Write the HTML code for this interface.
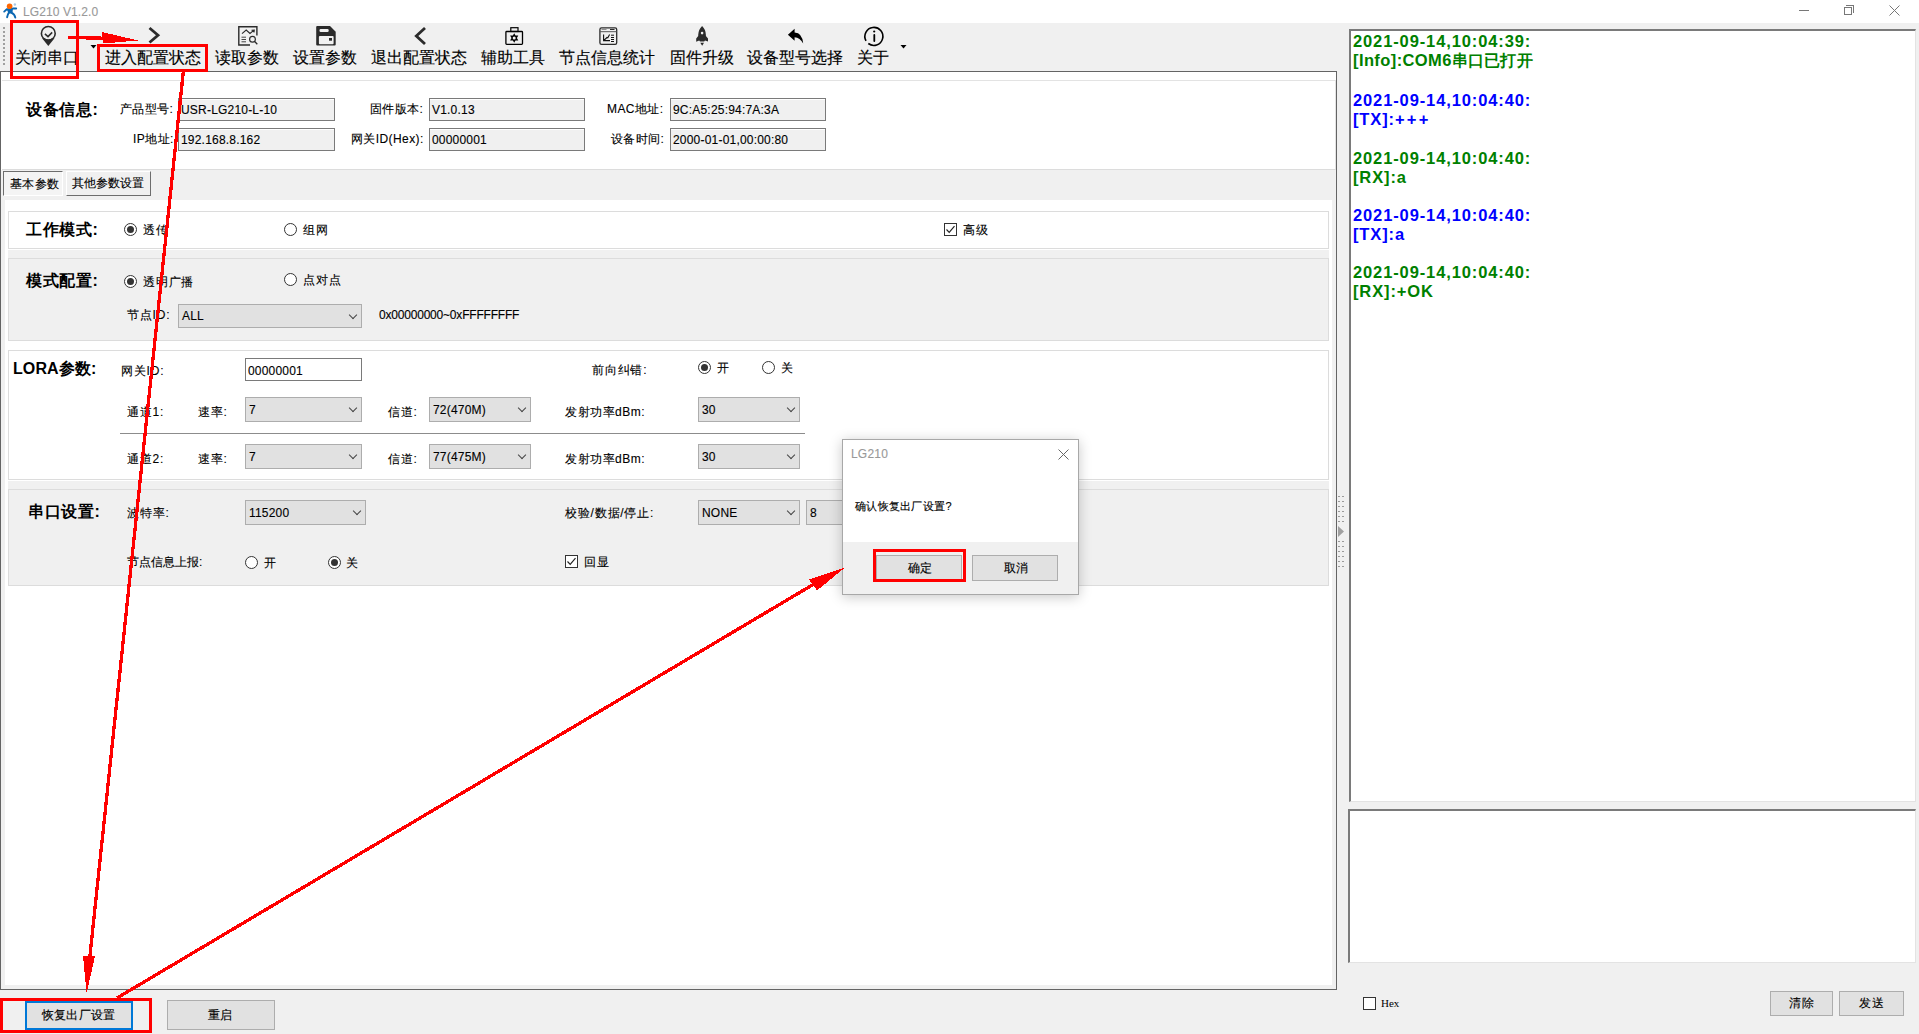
<!DOCTYPE html>
<html><head><meta charset="utf-8">
<style>
*{box-sizing:border-box}
html,body{margin:0;padding:0}
body{width:1919px;height:1034px;overflow:hidden;position:relative;background:#f0f0f0;font-family:"Liberation Sans",sans-serif;font-size:12px;color:#000}
.a{position:absolute}
.t{position:absolute;white-space:nowrap;line-height:14px;font-size:12px;letter-spacing:0.8px;-webkit-text-stroke:0.12px currentColor}
.t.v{letter-spacing:0.2px}
.tb{position:absolute;white-space:nowrap;line-height:18px;font-size:16px;-webkit-text-stroke:0.15px #000}
.h{position:absolute;white-space:nowrap;line-height:18px;font-size:16px;font-weight:bold;letter-spacing:0.6px}
.tx{position:absolute;background:#f0f0f0;border:1px solid #7a7a7a;box-shadow:inset 0 1px 0 #fff}
.cb{position:absolute;background:#e1e1e1;border:1px solid #adadad}
.cb i{position:absolute;right:5px;top:7px;width:6px;height:6px;border-right:1px solid #444;border-bottom:1px solid #444;transform:rotate(45deg)}
.rd{position:absolute;width:13px;height:13px;border-radius:50%;border:1px solid #333;background:#fff}
.rd.on::after{content:"";position:absolute;left:2px;top:2px;width:7px;height:7px;border-radius:50%;background:#333}
.ck{position:absolute;width:13px;height:13px;border:1px solid #333;background:#fff}
.btn{position:absolute;background:#e1e1e1;border:1px solid #adadad;text-align:center}
.pnl{position:absolute;border:1px solid #dcdcdc}
.log{position:absolute;white-space:nowrap;font-size:16.5px;font-weight:bold;line-height:19px;letter-spacing:0.88px;font-family:"Liberation Sans",sans-serif}
.g{color:#008000}.b{color:#0000ff}
</style></head><body>

<!-- title bar -->
<div class="a" style="left:0;top:0;width:1919px;height:23px;background:#fff"></div>
<svg class="a" style="left:0;top:0" width="22" height="22" viewBox="0 0 22 22">
<g stroke="#0b67b2" stroke-width="1.9" stroke-linecap="round" stroke-linejoin="round" fill="none">
<path d="M4.2 11.6 L6.8 9.3 L9.8 10.2"/>
<path d="M10.5 9.6 L12.8 8.5 L16.2 8.5"/>
<path d="M8.9 12.6 Q7.7 14.2 7.1 17.3"/>
<path d="M11.6 12.8 Q14.6 14 15.3 17.6"/>
</g>
<path d="M6.8 8.6 L12.9 8 L12.6 12.9 Q10.5 13.8 8.3 13.2 Z" fill="#0b67b2"/>
<circle cx="9.6" cy="6.3" r="2.8" fill="#ff6600"/>
<circle cx="14.9" cy="4.5" r="1.2" fill="#a9c9e6"/>
</svg>
<div class="t" style="left:23px;top:5px;color:#999;letter-spacing:0.1px">LG210 V1.2.0</div>
<div class="a" style="left:1799px;top:10px;width:10px;height:1px;background:#777"></div>
<div class="a" style="left:1844px;top:7px;width:8px;height:8px;border:1px solid #777"></div>
<div class="a" style="left:1846px;top:5px;width:8px;height:8px;border-top:1px solid #777;border-right:1px solid #777"></div>
<svg class="a" style="left:1889px;top:5px" width="11" height="11"><path d="M0.5 0.5 L10.5 10.5 M10.5 0.5 L0.5 10.5" stroke="#777" stroke-width="1"/></svg>

<!-- toolbar -->
<div class="a" style="left:0;top:23px;width:1337px;height:48px;background:#f0f0f0"></div>
<svg class="a" style="left:0;top:0" width="1337" height="71" viewBox="0 0 1337 71">
<g fill="#a0a0a0">
<rect x="3" y="27" width="2" height="2"/><rect x="3" y="31" width="2" height="2"/><rect x="3" y="35" width="2" height="2"/><rect x="3" y="39" width="2" height="2"/><rect x="3" y="43" width="2" height="2"/><rect x="3" y="47" width="2" height="2"/><rect x="3" y="51" width="2" height="2"/><rect x="3" y="55" width="2" height="2"/><rect x="3" y="59" width="2" height="2"/><rect x="3" y="63" width="2" height="2"/>
</g>
<!-- pin -->
<path d="M42.1 38.3 L48.3 45.9 L54.5 38.3 Z" fill="#2b2b2b"/><circle cx="48.3" cy="33.4" r="6.2" fill="#f0f0f0"/>
<circle cx="48.3" cy="33.4" r="6.9" fill="none" stroke="#2b2b2b" stroke-width="1.6"/>
<path d="M44.9 33.9 L48 36.6 L52.2 32.4" fill="none" stroke="#2b2b2b" stroke-width="1.5"/>
<path d="M90.5 45 L96.5 45 L93.5 48.5 Z" fill="#000"/>
<!-- > -->
<path d="M149.5 28 L158 35.2 L149.5 42.5" fill="none" stroke="#2b2b2b" stroke-width="2.8"/>
<!-- read -->
<path d="M256.9 35.5 L256.9 26.8 L238.8 26.8 L238.8 45 L250 45" fill="none" stroke="#2b2b2b" stroke-width="1.4"/>
<path d="M242 33.7 L246.2 30 L250 33.5 L254 30.2 M251.5 30.2 L254.3 30 L254 32.5" fill="none" stroke="#2b2b2b" stroke-width="1.1"/>
<path d="M241.5 37.2 H246 M241.5 39.5 H246 M241.5 41.8 H246" stroke="#444" stroke-width="1"/>
<circle cx="252.5" cy="39.3" r="2.9" fill="none" stroke="#2b2b2b" stroke-width="1.2"/>
<path d="M254.5 41.3 L257.3 44.3" stroke="#2b2b2b" stroke-width="1.3"/>
<!-- save -->
<path d="M317.2 26 L330 26 L335.7 31.7 L335.7 44.6 Q335.7 45.6 334.7 45.6 L317.2 45.6 Q316.2 45.6 316.2 44.6 L316.2 27 Q316.2 26 317.2 26 Z" fill="#2b2b2b"/>
<rect x="319.5" y="29" width="9.2" height="3" rx="1.2" fill="#f0f0f0"/>
<rect x="318.9" y="36.1" width="14.7" height="8.1" rx="1" fill="#f0f0f0"/>
<rect x="329" y="38" width="3" height="2.7" fill="#2b2b2b"/>
<!-- < -->
<path d="M425 28 L416.3 36 L425 44" fill="none" stroke="#2b2b2b" stroke-width="2.8"/>
<!-- toolbox -->
<rect x="505.9" y="31.5" width="16.6" height="12.8" rx="0.8" fill="none" stroke="#000" stroke-width="1.3"/>
<rect x="510.8" y="27.7" width="7.2" height="3.8" fill="none" stroke="#000" stroke-width="1.2"/>
<path d="M514.2 33.2 L515.5 35.6 L518.3 35.6 L516.9 38 L518.3 40.4 L515.5 40.4 L514.2 42.8 L512.9 40.4 L510.1 40.4 L511.5 38 L510.1 35.6 L512.9 35.6 Z" fill="#000"/>
<circle cx="514.2" cy="38" r="1.5" fill="#f0f0f0"/>
<!-- stats -->
<rect x="599.9" y="27.9" width="16.8" height="16.4" rx="1.6" fill="none" stroke="#2b2b2b" stroke-width="1.3"/>
<path d="M600 31.7 H616.6" stroke="#555" stroke-width="1"/>
<path d="M601.5 29.5 H606.5" stroke="#777" stroke-width="0.8"/><path d="M610 29.5 H614.5" stroke="#2b2b2b" stroke-width="1"/>
<path d="M603.6 34.5 L603.6 40.6 L610 40.6 M603.6 40.6 L607 37.5 L607.8 37.8 L609.6 34.5" fill="none" stroke="#111" stroke-width="1.1"/>
<path d="M611 35.2 H614 M611 37.5 H614 M611 39.5 H614 M611 41.5 H614" stroke="#111" stroke-width="1"/>
<!-- rocket -->
<path d="M702.1 26 Q705.8 29.5 705.9 35 L705.9 36 L708 38.5 L708 41.5 L705 40.5 L704.2 41.6 L700 41.6 L699.2 40.5 L696.2 41.8 L696.2 38.5 L698.2 36 L698.2 35 Q698.4 29.5 702.1 26 Z" fill="#2b2b2b"/>
<circle cx="702.1" cy="33.1" r="1.3" fill="#f0f0f0"/>
<path d="M700.3 42.8 L704 42.8 L702.2 45.8 Z" fill="#2b2b2b"/>
<!-- reply -->
<path d="M787.9 34.7 L794.6 28.8 L794.6 32.4 Q802.5 32.8 803.2 43.6 Q800 37.5 794.6 37.2 L794.6 40.8 Z" fill="#000"/>
<!-- info -->
<path d="M866.0 40.8 A9.0 9.0 0 1 1 868.3 43.5" fill="none" stroke="#000" stroke-width="1.6"/>
<circle cx="874.2" cy="31.5" r="1.1" fill="#000"/>
<path d="M874.3 35 V41" stroke="#000" stroke-width="1.8" stroke-linecap="round"/>
<path d="M900.5 45 L906.5 45 L903.5 48.5 Z" fill="#000"/>
</svg>
<div class="tb" style="left:15px;top:49px">关闭串口</div>
<div class="tb" style="left:105px;top:49px">进入配置状态</div>
<div class="tb" style="left:215px;top:49px">读取参数</div>
<div class="tb" style="left:293px;top:49px">设置参数</div>
<div class="tb" style="left:371px;top:49px">退出配置状态</div>
<div class="tb" style="left:481px;top:49px">辅助工具</div>
<div class="tb" style="left:559px;top:49px">节点信息统计</div>
<div class="tb" style="left:670px;top:49px">固件升级</div>
<div class="tb" style="left:747px;top:49px">设备型号选择</div>
<div class="tb" style="left:857px;top:49px">关于</div>


<!-- left panel -->
<div class="a" style="left:0;top:71px;width:1337px;height:919px;border:1px solid #646464;background:#f0f0f0"></div>
<div class="a" style="left:1px;top:72px;width:1335px;height:98px;background:#fff;border-top:0;"></div>
<div class="a" style="left:2px;top:80px;width:1334px;height:90px;border-top:1px solid #e3e3e3;border-right:1px solid #e3e3e3;border-bottom:1px solid #dcdcdc"></div>

<div class="h" style="left:26px;top:101px">设备信息:</div>
<div class="t" style="left:120px;top:102px;letter-spacing:0.4px">产品型号:</div>
<div class="t" style="left:133px;top:132px;letter-spacing:0.4px">IP地址:</div>
<div class="tx" style="left:178px;top:98px;width:157px;height:23px"></div>
<div class="t v" style="left:181px;top:103px">USR-LG210-L-10</div>
<div class="tx" style="left:178px;top:128px;width:157px;height:23px"></div>
<div class="t v" style="left:181px;top:133px">192.168.8.162</div>
<div class="t" style="left:370px;top:102px;letter-spacing:0.4px">固件版本:</div>
<div class="t" style="left:351px;top:132px;letter-spacing:0.4px">网关ID(Hex):</div>
<div class="tx" style="left:429px;top:98px;width:156px;height:23px"></div>
<div class="t v" style="left:432px;top:103px">V1.0.13</div>
<div class="tx" style="left:429px;top:128px;width:156px;height:23px"></div>
<div class="t v" style="left:432px;top:133px">00000001</div>
<div class="t" style="left:607px;top:102px;letter-spacing:0.4px">MAC地址:</div>
<div class="t" style="left:611px;top:132px;letter-spacing:0.4px">设备时间:</div>
<div class="tx" style="left:670px;top:98px;width:156px;height:23px"></div>
<div class="t v" style="left:673px;top:103px">9C:A5:25:94:7A:3A</div>
<div class="tx" style="left:670px;top:128px;width:156px;height:23px"></div>
<div class="t v" style="left:673px;top:133px">2000-01-01,00:00:80</div>

<div class="a" style="left:3px;top:171px;width:60px;height:25px;border-top:1px solid #6d6d6d;border-left:1px solid #6d6d6d;border-right:1px solid #fff;border-bottom:1px solid #fff;background:#f4f4f4"></div>
<div class="t" style="left:10px;top:177px;letter-spacing:0.4px">基本参数</div>
<div class="a" style="left:66px;top:171px;width:85px;height:25px;border-top:1px solid #fff;border-left:1px solid #fff;border-right:1px solid #6d6d6d;border-bottom:1px solid #6d6d6d;background:#f0f0f0"></div>
<div class="t" style="left:72px;top:176px;letter-spacing:0.1px">其他参数设置</div>
<div class="a" style="left:5px;top:200px;width:1327px;height:785px;background:#fff"></div>

<!-- panel A -->
<div class="pnl" style="left:8px;top:211px;width:1321px;height:38px;background:#fff"></div>
<div class="a" style="left:8px;top:250px;width:1321px;height:8px;background:#f0f0f0"></div>
<div class="h" style="left:26px;top:221px">工作模式:</div>
<div class="rd on" style="left:124px;top:223px"></div>
<div class="t" style="left:143px;top:223px">透传</div>
<div class="rd" style="left:284px;top:223px"></div>
<div class="t" style="left:303px;top:223px">组网</div>
<div class="ck" style="left:944px;top:223px"></div>
<svg class="a" style="left:944px;top:223px" width="13" height="13"><path d="M2.5 6.5 L5.2 9.3 L10.5 3.2" fill="none" stroke="#222" stroke-width="1.2"/></svg>
<div class="t" style="left:963px;top:223px">高级</div>
<!-- panel B -->
<div class="pnl" style="left:8px;top:258px;width:1321px;height:83px;background:#f0f0f0"></div>
<div class="h" style="left:26px;top:272px">模式配置:</div>
<div class="rd on" style="left:124px;top:275px"></div>
<div class="t" style="left:143px;top:275px">透明广播</div>
<div class="rd" style="left:284px;top:273px"></div>
<div class="t" style="left:303px;top:273px">点对点</div>
<div class="t" style="left:127px;top:308px">节点ID:</div>
<div class="cb" style="left:178px;top:304px;width:184px;height:24px"><i></i></div>
<div class="t v" style="left:182px;top:309px">ALL</div>
<div class="t v" style="left:379px;top:308px;letter-spacing:-0.2px">0x00000000~0xFFFFFFFF</div>
<!-- panel C -->
<div class="pnl" style="left:8px;top:350px;width:1321px;height:130px;background:#fff"></div>
<div class="a" style="left:8px;top:481px;width:1321px;height:8px;background:#f0f0f0"></div>
<div class="h" style="left:13px;top:360px;letter-spacing:0.1px">LORA参数:</div>
<div class="t" style="left:121px;top:364px">网关ID:</div>
<div class="a" style="left:245px;top:358px;width:117px;height:23px;border:1px solid #7a7a7a;background:#fff"></div>
<div class="t v" style="left:248px;top:364px">00000001</div>
<div class="t" style="left:592px;top:363px">前向纠错:</div>
<div class="rd on" style="left:698px;top:361px"></div>
<div class="t" style="left:717px;top:361px">开</div>
<div class="rd" style="left:762px;top:361px"></div>
<div class="t" style="left:781px;top:361px">关</div>

<div class="t" style="left:127px;top:405px">通道1:</div>
<div class="t" style="left:198px;top:405px">速率:</div>
<div class="cb" style="left:245px;top:397px;width:117px;height:25px"><i></i></div>
<div class="t v" style="left:249px;top:403px">7</div>
<div class="t" style="left:388px;top:405px">信道:</div>
<div class="cb" style="left:429px;top:397px;width:102px;height:25px"><i></i></div>
<div class="t v" style="left:433px;top:403px">72(470M)</div>
<div class="t" style="left:565px;top:405px;letter-spacing:0.5px">发射功率dBm:</div>
<div class="cb" style="left:698px;top:397px;width:102px;height:25px"><i></i></div>
<div class="t v" style="left:702px;top:403px">30</div>
<div class="a" style="left:120px;top:433px;width:685px;height:1px;background:#8c8c8c"></div>
<div class="t" style="left:127px;top:452px">通道2:</div>
<div class="t" style="left:198px;top:452px">速率:</div>
<div class="cb" style="left:245px;top:444px;width:117px;height:25px"><i></i></div>
<div class="t v" style="left:249px;top:450px">7</div>
<div class="t" style="left:388px;top:452px">信道:</div>
<div class="cb" style="left:429px;top:444px;width:102px;height:25px"><i></i></div>
<div class="t v" style="left:433px;top:450px">77(475M)</div>
<div class="t" style="left:565px;top:452px;letter-spacing:0.5px">发射功率dBm:</div>
<div class="cb" style="left:698px;top:444px;width:102px;height:25px"><i></i></div>
<div class="t v" style="left:702px;top:450px">30</div>
<!-- panel D -->
<div class="pnl" style="left:8px;top:489px;width:1321px;height:97px;background:#f0f0f0"></div>
<div class="h" style="left:28px;top:503px">串口设置:</div>
<div class="t" style="left:127px;top:506px">波特率:</div>
<div class="cb" style="left:245px;top:500px;width:121px;height:25px"><i></i></div>
<div class="t v" style="left:249px;top:506px">115200</div>
<div class="t" style="left:565px;top:506px">校验/数据/停止:</div>
<div class="cb" style="left:698px;top:500px;width:102px;height:25px"><i></i></div>
<div class="t v" style="left:702px;top:506px">NONE</div>
<div class="cb" style="left:806px;top:500px;width:102px;height:25px"><i></i></div>
<div class="t v" style="left:810px;top:506px">8</div>
<div class="t" style="left:127px;top:555px;letter-spacing:0">节点信息上报:</div>
<div class="rd" style="left:245px;top:556px"></div>
<div class="t" style="left:264px;top:556px">开</div>
<div class="rd on" style="left:328px;top:556px"></div>
<div class="t" style="left:346px;top:556px">关</div>
<div class="ck" style="left:565px;top:555px"></div>
<svg class="a" style="left:565px;top:555px" width="13" height="13"><path d="M2.5 6.5 L5.2 9.3 L10.5 3.2" fill="none" stroke="#222" stroke-width="1.2"/></svg>
<div class="t" style="left:584px;top:555px">回显</div>


<!-- splitter -->
<svg class="a" style="left:1337px;top:490px" width="8" height="80"><g fill="#9a9a9a"><rect x="1" y="6" width="2" height="1"/><rect x="5" y="6" width="2" height="1"/><rect x="1" y="11" width="2" height="1"/><rect x="5" y="11" width="2" height="1"/><rect x="1" y="16" width="2" height="1"/><rect x="5" y="16" width="2" height="1"/><rect x="1" y="21" width="2" height="1"/><rect x="5" y="21" width="2" height="1"/><rect x="1" y="26" width="2" height="1"/><rect x="5" y="26" width="2" height="1"/><rect x="1" y="31" width="2" height="1"/><rect x="5" y="31" width="2" height="1"/><rect x="1" y="51" width="2" height="1"/><rect x="5" y="51" width="2" height="1"/><rect x="1" y="56" width="2" height="1"/><rect x="5" y="56" width="2" height="1"/><rect x="1" y="61" width="2" height="1"/><rect x="5" y="61" width="2" height="1"/><rect x="1" y="66" width="2" height="1"/><rect x="5" y="66" width="2" height="1"/><rect x="1" y="71" width="2" height="1"/><rect x="5" y="71" width="2" height="1"/><rect x="1" y="76" width="2" height="1"/><rect x="5" y="76" width="2" height="1"/></g><path d="M1 36 L7 41.5 L1 47 Z" fill="#a0a0a0"/></svg>
<!-- log box -->
<div class="a" style="left:1349px;top:29px;width:567px;height:773px;background:#fff;border-top:2px solid #6d6d6d;border-left:2px solid #6d6d6d;border-bottom:1px solid #e3e3e3;border-right:1px solid #e3e3e3;border-top-color:#7a7a7a;border-left-color:#7a7a7a"></div>
<div class="log g" style="left:1353px;top:32px">2021-09-14,10:04:39:</div>
<div class="log g" style="left:1353px;top:51px"><span style="letter-spacing:0.4px">[Info]:COM6</span><span style="letter-spacing:0.2px;font-size:16px">串口已打开</span></div>
<div class="log b" style="left:1353px;top:91px">2021-09-14,10:04:40:</div>
<div class="log b" style="left:1353px;top:110px">[TX]:<span style="letter-spacing:2.2px">+++</span></div>
<div class="log g" style="left:1353px;top:149px">2021-09-14,10:04:40:</div>
<div class="log g" style="left:1353px;top:168px">[RX]:a</div>
<div class="log b" style="left:1353px;top:206px">2021-09-14,10:04:40:</div>
<div class="log b" style="left:1353px;top:225px">[TX]:a</div>
<div class="log g" style="left:1353px;top:263px">2021-09-14,10:04:40:</div>
<div class="log g" style="left:1353px;top:282px">[RX]:+OK</div>
<!-- send box -->
<div class="a" style="left:1348px;top:809px;width:568px;height:154px;background:#fff;border-top:2px solid #6d6d6d;border-left:2px solid #6d6d6d;border-bottom:1px solid #e3e3e3;border-right:1px solid #e3e3e3;border-top-color:#7a7a7a;border-left-color:#7a7a7a"></div>
<div class="a" style="left:1363px;top:997px;width:13px;height:13px;border:1px solid #333;background:#fff"></div>
<div class="a" style="left:1381px;top:996px;font-family:'Liberation Serif',serif;font-size:11px;line-height:14px">Hex</div>
<div class="btn" style="left:1770px;top:991px;width:63px;height:25px"></div>
<div class="t" style="left:1789px;top:996px">清除</div>
<div class="btn" style="left:1839px;top:991px;width:65px;height:25px"></div>
<div class="t" style="left:1859px;top:996px">发送</div>

<!-- bottom buttons -->
<div class="a" style="left:25px;top:1001px;width:108px;height:29px;background:#e1e1e1;border:2px solid #0078d7"></div>
<div class="t" style="left:42px;top:1008px;letter-spacing:0.2px;-webkit-text-stroke:0.15px #000">恢复出厂设置</div>
<div class="btn" style="left:167px;top:1000px;width:108px;height:30px"></div>
<div class="t" style="left:208px;top:1008px;letter-spacing:0.2px;-webkit-text-stroke:0.15px #000">重启</div>

<!-- dialog -->
<div class="a" style="left:842px;top:439px;width:237px;height:156px;background:#fff;border:1px solid #a8a8a8;box-shadow:0 2px 12px rgba(0,0,0,0.22)"></div>
<div class="a" style="left:843px;top:542px;width:235px;height:52px;background:#f0f0f0"></div>
<div class="t" style="left:851px;top:447px;color:#999;letter-spacing:0.2px">LG210</div>
<svg class="a" style="left:1058px;top:449px" width="11" height="11"><path d="M0.5 0.5 L10.5 10.5 M10.5 0.5 L0.5 10.5" stroke="#666" stroke-width="1"/></svg>
<div class="t" style="left:855px;top:499px;font-size:11px;letter-spacing:0.3px">确认恢复出厂设置?</div>
<div class="btn" style="left:876px;top:555px;width:86px;height:25px"></div>
<div class="t" style="left:908px;top:561px;letter-spacing:0">确定</div>
<div class="btn" style="left:972px;top:555px;width:86px;height:26px"></div>
<div class="t" style="left:1004px;top:561px;letter-spacing:0">取消</div>

<svg class="a" style="left:0;top:0" width="1919" height="1034" shape-rendering="crispEdges">
<g fill="none" stroke="#ff0000" stroke-width="3">
<rect x="11.5" y="21.5" width="66" height="56"/>
<rect x="98.5" y="45.5" width="108" height="25"/>
<rect x="874.5" y="550.5" width="90" height="30"/>
<rect x="1.5" y="999.5" width="149" height="32"/>
</g>
<g fill="none" stroke="#ff0000" stroke-width="3.3">
<path d="M68 37.5 L103 38.2"/>
<path d="M183.5 70 L89.5 960"/>
<path d="M117 998 L814 584"/>
</g>
<g fill="#ff0000">
<path d="M102 32 L138 40.5 L103 43.5 Z"/>
<path d="M83 956.3 L95 956.3 L86.6 993 Z"/>
<path d="M845 567.5 L809 579.5 L817 590.5 Z"/>
</g>
</svg>
</body></html>
